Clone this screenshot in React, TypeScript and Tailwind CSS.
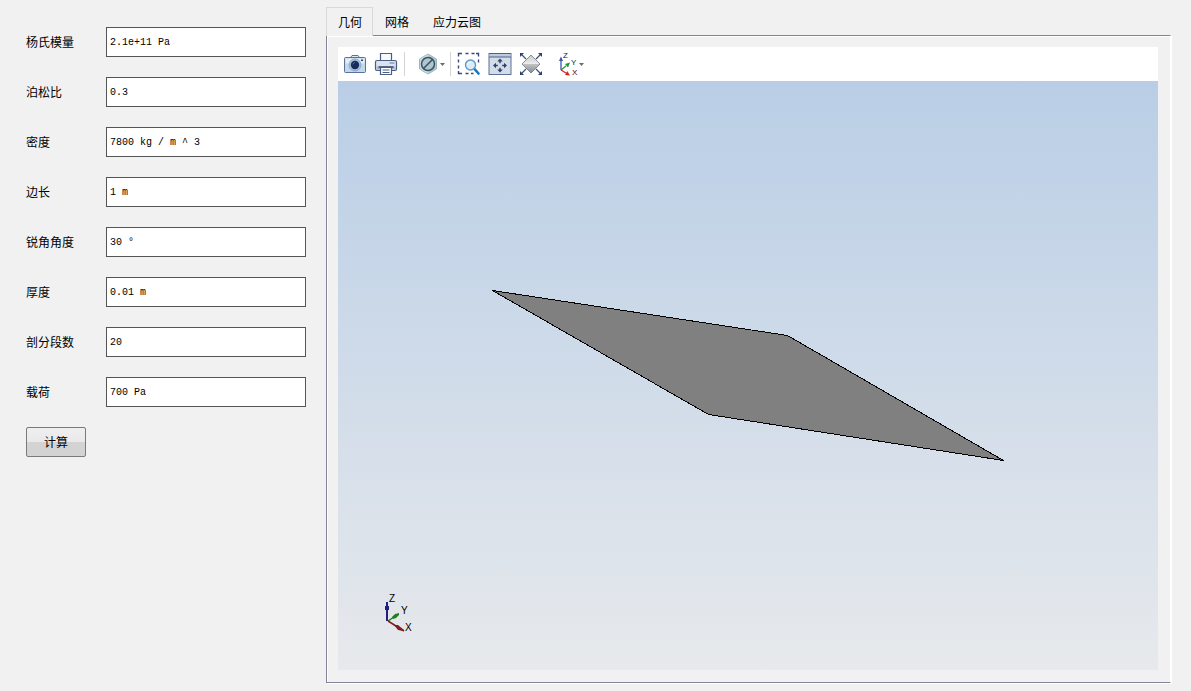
import { useState, type ReactNode } from 'react';

interface Field {
  id: string;
  label: string;
  value: string;
}

const initialFields: Field[] = [
  { id: 'young', label: '杨氏模量', value: '2.1e+11 Pa' },
  { id: 'poisson', label: '泊松比', value: '0.3' },
  { id: 'density', label: '密度', value: '7800 kg / m ^ 3' },
  { id: 'side', label: '边长', value: '1 m' },
  { id: 'angle', label: '锐角角度', value: '30 °' },
  { id: 'thickness', label: '厚度', value: '0.01 m' },
  { id: 'segments', label: '剖分段数', value: '20' },
  { id: 'load', label: '载荷', value: '700 Pa' },
];

const tabs = ['几何', '网格', '应力云图'];

function CameraIcon() {
  return (
    <svg viewBox="0 0 24 24" className="h-6 w-6">
      <rect x="1.5" y="5.5" width="21" height="15" rx="1" fill="#c3d8ec" stroke="#5b7199" />
      <path d="M7.5 5.5 9 3.500h6l1.500 2z" fill="#dfeaf5" stroke="#5b7199" />
      <path d="M2.500 6.500h19v5h-19z" fill="#e3edf7" />
      <circle cx="12" cy="13" r="6" fill="#a9c0da" stroke="#8fa8c8" />
      <circle cx="12" cy="13" r="4.200" fill="#172c5c" />
      <path d="M9.800 12.500a2.500 2.500 0 0 1 2.200-2" fill="none" stroke="#4c6ba3" />
      <rect x="18" y="7.500" width="2" height="1.500" fill="#2f456f" />
    </svg>
  );
}

function PrinterIcon() {
  return (
    <svg viewBox="0 0 24 24" className="h-6 w-6" stroke="#4a5d82" strokeWidth="1.2">
      <path d="M6.500 9V1.500h11V9" fill="#f7fafd" />
      <rect x="1.500" y="8.500" width="21" height="10" rx="1.500" fill="#dbe3ee" />
      <path d="M2.500 14.500h19v3h-19z" fill="#a9b9d0" stroke="none" />
      <path d="M15.500 11h5" stroke="#7688a8" />
      <path d="M4.500 15h15" strokeWidth="1.800" />
      <path d="M6.500 15.500h11v7h-11z" fill="#fff" />
      <path d="M8.500 18h7M8.500 20.500h7" strokeWidth="1" />
    </svg>
  );
}

function HexIcon() {
  return (
    <svg viewBox="0 0 24 24" className="h-6 w-6">
      <path d="M12 2 20.500 7v10L12 22l-8.500-5V7z" fill="#b4c8ce" stroke="#9fb5bc" />
      <path d="M12 2.500v19l-8-4.500V7z" fill="#cddbdf" />
      <circle cx="12" cy="12" r="6.500" fill="#b5c5cd" stroke="#345765" strokeWidth="1.500" />
      <path d="m7.500 16.500 9-9" stroke="#345765" strokeWidth="1.600" />
    </svg>
  );
}

function ZoomBoxIcon() {
  return (
    <svg viewBox="0 0 24 24" className="h-6 w-6" fill="none">
      <path
        d="M1.500 4.500V1.500H5M8.500 1.500h3M14.500 1.500h3M19 1.500h2.500v3M21.500 7.500v3M1.500 7.500v3M1.500 13.500v3M1.500 19v2.500H5M8.500 21.500h3M14 21.500h2.500"
        stroke="#3a4a78"
        strokeWidth="1.400"
      />
      <path d="m17.500 17 4 4.500" stroke="#1878b8" strokeWidth="2.600" strokeLinecap="round" />
      <circle cx="13.500" cy="13" r="5" fill="#dcebf8" stroke="#5a9ac8" strokeWidth="1.400" />
      <path d="M10.500 13a3 3 0 0 1 3-3" stroke="#fff" />
    </svg>
  );
}

function PanIcon() {
  return (
    <svg viewBox="0 0 24 24" className="h-6 w-6">
      <rect x="1" y="1.500" width="22" height="21" fill="#d3dde8" stroke="#5f7196" />
      <path d="M1.500 2h21v3h-21z" fill="#bccbdd" />
      <path d="M1 1.500h22M1 5h22" stroke="#4f628b" />
      <path
        d="m12 6.500 2.800 3H12.700V11.300h-1.400V9.500H9.200zM12 20.500l-2.800-3h2.100v-1.800h1.400v1.800h2.100zM5 13.500l3-2.800v2.100h1.800v1.400H8v2.100zM19 13.500l-3-2.800v2.100h-1.800v1.400H16v2.100z"
        fill="#2d4170"
      />
    </svg>
  );
}

function FitIcon() {
  return (
    <svg viewBox="0 0 24 24" className="h-6 w-6">
      <defs>
        <linearGradient id="fit-top" x1="0" y1="0" x2="0" y2="1">
          <stop offset="0" stopColor="#c4c7ca" />
          <stop offset="1" stopColor="#ededed" />
        </linearGradient>
        <linearGradient id="fit-bottom" x1="0" y1="0" x2="0" y2="1">
          <stop offset="0" stopColor="#c2c4c6" />
          <stop offset="1" stopColor="#85898e" />
        </linearGradient>
      </defs>
      <path d="m2 2 5 5M22 2l-5 5M2 22l5-5M22 22l-5-5" stroke="#3a4f7c" strokeWidth="1.200" />
      <path d="M1 1h4L1 5zM23 1v4l-4-4zM1 23v-4l4 4zM23 23h-4l4-4z" fill="#2d4170" />
      <path d="m12 3 9 9H3z" fill="url(#fit-top)" />
      <path d="M3 12h18l-9 9z" fill="url(#fit-bottom)" />
      <path d="m12 3 9 9-9 9-9-9z" fill="none" stroke="#74797f" strokeWidth="0.800" />
    </svg>
  );
}

function AxesIcon() {
  return (
    <svg
      viewBox="0 0 22 24"
      className="h-6 w-[22px]"
      fontFamily="'Liberation Sans', Arial, sans-serif"
      fontSize="8"
    >
      <path d="M4 18V8" stroke="#3c55b0" strokeWidth="1.300" />
      <path d="M4 4.500 6 9H2z" fill="#3c55b0" />
      <path d="m4 18 5-4" stroke="#1d9440" strokeWidth="1.300" />
      <path d="m13 10.500-2 5-3-3.500z" fill="#1d9440" />
      <path d="m4 18 5 3" stroke="#e02020" strokeWidth="1.300" />
      <path d="m13 23.500-5-.5 2.300-4z" fill="#e02020" />
      <text x="6" y="6" fill="#222">Z</text>
      <text x="14" y="13" fill="#222">Y</text>
      <text x="15" y="23" fill="#222">X</text>
    </svg>
  );
}

function Caret() {
  return (
    <svg viewBox="0 0 5 3" className="h-[3px] w-[5px]">
      <path d="M0 0h5L2.500 3z" fill="#6b6b6b" />
    </svg>
  );
}

interface ToolButtonProps {
  label: string;
  className?: string;
  children: ReactNode;
}

function ToolButton({ label, className = '', children }: ToolButtonProps) {
  return (
    <button type="button" aria-label={label} title={label} className={`flex items-center ${className}`}>
      {children}
    </button>
  );
}

function Toolbar() {
  return (
    <div role="toolbar" aria-label="视图工具" className="flex h-[34px] items-center bg-white pl-[5px]">
      <ToolButton label="截图">
        <CameraIcon />
      </ToolButton>
      <ToolButton label="打印" className="ml-[7px]">
        <PrinterIcon />
      </ToolButton>
      <div className="ml-1.5 h-6 w-px bg-[#d4d4d4]" />
      <ToolButton label="显示样式" className="ml-[11px]">
        <HexIcon />
        <Caret />
      </ToolButton>
      <div className="ml-[5px] h-6 w-px bg-[#d4d4d4]" />
      <ToolButton label="框选缩放" className="ml-1.5">
        <ZoomBoxIcon />
      </ToolButton>
      <ToolButton label="平移" className="ml-[7px]">
        <PanIcon />
      </ToolButton>
      <ToolButton label="适应窗口" className="ml-[7px]">
        <FitIcon />
      </ToolButton>
      <ToolButton label="视角" className="ml-3.5">
        <AxesIcon />
        <Caret />
      </ToolButton>
    </div>
  );
}

// Rhombic plate and the coordinate triad
function Scene() {
  return (
    <svg
      viewBox="0 0 820 589"
      role="img"
      aria-label="几何模型"
      className="block min-h-0 w-full flex-1 bg-linear-to-b from-[#b9cee6] to-[#e7e9ec]"
    >
      <path
        d="M154.500 209.500 449.500 254.500 665.500 379.500 370.500 333.500z"
        fill="#808080"
        stroke="#000"
        shapeRendering="crispEdges"
      />
      <g fontFamily="'Liberation Sans', Arial, sans-serif" fontSize="10" fill="#000">
        <path d="M49 540v-19" stroke="#20207e" strokeWidth="2" />
        <path d="M47 529v-4h4v4z" fill="#20207e" />
        <path d="m50 540 6-4" stroke="#207e20" strokeWidth="1.500" />
        <path d="m54 536 3-3 4-1v2l-3 3-3 1z" fill="#207e20" />
        <path d="m50 540 16 10" stroke="#7e2020" strokeWidth="1.500" />
        <path d="m56 544 4 0 6 5-1 1-5-1z" fill="#7e2020" />
        <text x="51" y="521">Z</text>
        <text x="63" y="533">Y</text>
        <text x="67" y="550">X</text>
      </g>
    </svg>
  );
}

export default function App() {
  const [fields, setFields] = useState(initialFields);
  const [activeTab, setActiveTab] = useState(0);

  const updateField = (id: string, value: string) => {
    setFields(prev => prev.map(f => (f.id === id ? { ...f, value } : f)));
  };

  return (
    <div className="flex min-h-screen bg-[#f1f1f1] pr-5 font-['Liberation_Sans','Noto_Sans_CJK_SC',sans-serif] text-xs text-black">
      {/* Parameters */}
      <form className="flex w-[326px] shrink-0 flex-col gap-5 pt-[27px] pr-5 pl-[26px]" onSubmit={e => e.preventDefault()}>
        {fields.map(field => (
          <div key={field.id} className="flex h-[30px] items-center">
            <label htmlFor={field.id} className="w-20 shrink-0 pt-0.5">
              {field.label}
            </label>
            <input
              id={field.id}
              type="text"
              value={field.value}
              onChange={e => updateField(field.id, e.target.value)}
              className="h-full w-full min-w-0 border border-[#555] bg-white px-[3px] font-['Liberation_Mono','Noto_Sans_CJK_SC',monospace] text-[10px]"
            />
          </div>
        ))}
        <button
          type="submit"
          className="h-[30px] w-[60px] rounded-xs border border-[#7a7a7a] bg-linear-to-b from-[#efefef] from-0% via-[#e9e9e9] via-50% to-[#d3d3d3] to-50% pt-0.5"
        >
          计算
        </button>
      </form>

      {/* Viewer */}
      <main className="flex min-w-0 flex-1 flex-col pt-[7px] pb-2">
        <div role="tablist" className="flex h-7">
          {tabs.map((tab, i) => (
            <button
              key={tab}
              id={`tab-${i}`}
              type="button"
              role="tab"
              aria-selected={i === activeTab}
              aria-controls="viewer"
              onClick={() => setActiveTab(i)}
              className={
                i === activeTab
                  ? 'relative -mb-px border border-b-0 border-[#d9d9d9] bg-[#f1f1f1] pt-0.5 pr-2.5 pl-[11px]'
                  : 'px-3 pt-1'
              }
            >
              {tab}
            </button>
          ))}
        </div>
        <div
          id="viewer"
          role="tabpanel"
          aria-labelledby={`tab-${activeTab}`}
          className="flex flex-1 flex-col border border-t-[#83838d] border-r-white border-b-[#83839a] border-l-[#83839a] pt-[11px] pr-3 pb-3 pl-[11px] shadow-[1px_1px_0_#fff,inset_1px_1px_0_#fff]"
        >
          <Toolbar />
          <Scene />
        </div>
      </main>
    </div>
  );
}
